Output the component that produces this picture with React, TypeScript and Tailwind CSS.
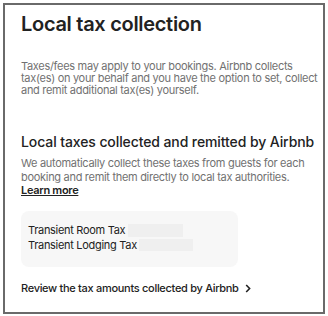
export default function App() {
  return (
    <div
      className="w-[328px] h-[316px] bg-white p-[3px]"
      style={{ fontFamily: "Inter, 'Noto Sans', sans-serif" }}
    >
      <div className="h-[311px] w-[322px] border-2 border-[#6a6a6a] pl-4 pt-[7px] text-[#222222]">
        <h1 className="text-[20px] leading-[24px] font-semibold tracking-[-0.3px]">
          Local tax collection
        </h1>
        <p className="mt-[24px] text-[11px] leading-[12px] tracking-[-0.3px] text-[#717171] pr-1">
          Taxes/fees may apply to your bookings. Airbnb collects tax(es) on your behalf and you
          have the option to set, collect and remit additional tax(es) yourself.
        </p>

        <h2 className="mt-[37px] text-[14px] leading-[18px] font-medium tracking-[-0.1px] whitespace-nowrap">
          Local taxes collected and remitted by Airbnb
        </h2>
        <p className="mt-[6px] text-[11px] leading-[13.5px] tracking-[-0.3px] text-[#717171] pr-3">
          We automatically collect these taxes from guests for each booking and remit them
          directly to local tax authorities.
          <br />
          <a className="font-semibold text-[#222222] underline">Learn more</a>
        </p>

        <div className="mt-[13px] w-[217px] h-[56px] rounded-lg bg-[#f7f7f7] px-[7px] pt-[12px] text-[11px] leading-[15px] tracking-[-0.3px]">
          <div className="flex items-center">
            <span>Transient Room Tax</span>
            <span className="ml-[3px] inline-block w-[55px] h-[13px] bg-[#efefef]" />
          </div>
          <div className="flex items-center">
            <span>Transient Lodging Tax</span>
            <span className="ml-[2px] inline-block w-[54px] h-[12px] bg-[#efefef]" />
          </div>
        </div>

        <div className="mt-[14px] flex items-center gap-[6px] text-[11px] leading-[15px] font-medium tracking-[-0.3px]">
          <span>Review the tax amounts collected by Airbnb</span>
          <svg width="6" height="9" viewBox="0 0 6 9" fill="none">
            <path d="M1.2 1 L4.6 4.5 L1.2 8" stroke="#222222" strokeWidth="1.6" />
          </svg>
        </div>
      </div>
    </div>
  );
}
